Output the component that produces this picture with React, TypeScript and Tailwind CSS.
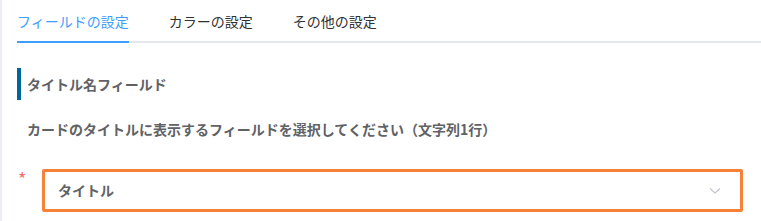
import React from "react";

export default function App() {
  const font = { fontFamily: '"Noto Sans CJK JP", "Noto Sans", sans-serif' };
  return (
    <div
      className="w-[761px] h-[221px] bg-white border-l-2 border-[#ebeef5] overflow-hidden"
      style={font}
    >
      <div className="pl-[15px]">
        {/* tabs */}
        <div className="flex pt-[1px] border-b-2 border-[#e4e7ed] text-[14px] leading-[40px]">
          <div className="relative h-[40px] text-[#409eff] pr-[40px]">
            フィールドの設定
            <div className="absolute left-0 right-[40px] bottom-[-2px] h-[2px] bg-[#409eff]" />
          </div>
          <div className="h-[40px] text-[#303133] pr-[40px]">カラーの設定</div>
          <div className="h-[40px] text-[#303133]">その他の設定</div>
        </div>

        {/* heading */}
        <div className="mt-[25px] flex items-center h-[32px] border-l-4 border-[#006699] pl-[6px] text-[14px] font-bold text-[#606266]">
          タイトル名フィールド
        </div>

        {/* description */}
        <div className="mt-[18px] pl-[10px] text-[14px] font-bold text-[#606266] leading-[22px]">
          カードのタイトルに表示するフィールドを選択してください（文字列1行）
        </div>

        {/* select row */}
        <div className="mt-[29px] flex items-start">
          <span className="w-[25px] pl-[1px] text-[#f56c6c] text-[18px] leading-[14px] pt-[2px]">*</span>
          <div className="w-[701px] h-[43px] border-[3px] border-[#f5813a] rounded-[2px] flex items-center justify-between pl-[13px] pr-[19px]">
            <span className="text-[14px] font-bold text-[#606266]">タイトル</span>
            <svg width="12" height="8" viewBox="0 0 12 8" fill="none">
              <path d="M1 1.5 L6 6 L11 1.5" stroke="#c0c4cc" strokeWidth="1.2" />
            </svg>
          </div>
        </div>
      </div>
    </div>
  );
}
